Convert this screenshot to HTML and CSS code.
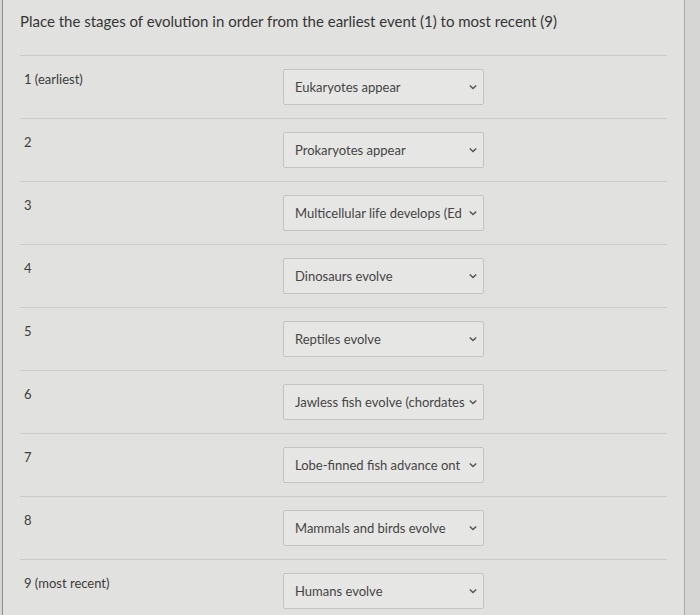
FILE: index.html
```html
<!DOCTYPE html>
<html>
<head>
<meta charset="utf-8">
<link rel="stylesheet" href="styles.css">
</head>
<body>
<div class="panel">
  <div class="title">Place the stages of evolution in order from the earliest event (1) to most recent (9)</div>
  <div class="row"><div class="label">1 (earliest)</div><div class="select"><span>Eukaryotes appear</span><svg class="chev" viewBox="0 0 10 6"><path d="M1 1 L5 5 L9 1"/></svg></div></div>
  <div class="row"><div class="label">2</div><div class="select"><span>Prokaryotes appear</span><svg class="chev" viewBox="0 0 10 6"><path d="M1 1 L5 5 L9 1"/></svg></div></div>
  <div class="row"><div class="label">3</div><div class="select"><span>Multicellular life develops (Ed</span><svg class="chev" viewBox="0 0 10 6"><path d="M1 1 L5 5 L9 1"/></svg></div></div>
  <div class="row"><div class="label">4</div><div class="select"><span>Dinosaurs evolve</span><svg class="chev" viewBox="0 0 10 6"><path d="M1 1 L5 5 L9 1"/></svg></div></div>
  <div class="row"><div class="label">5</div><div class="select"><span>Reptiles evolve</span><svg class="chev" viewBox="0 0 10 6"><path d="M1 1 L5 5 L9 1"/></svg></div></div>
  <div class="row"><div class="label">6</div><div class="select"><span>Jawless fish evolve (chordates</span><svg class="chev" viewBox="0 0 10 6"><path d="M1 1 L5 5 L9 1"/></svg></div></div>
  <div class="row"><div class="label">7</div><div class="select"><span>Lobe-finned fish advance ont</span><svg class="chev" viewBox="0 0 10 6"><path d="M1 1 L5 5 L9 1"/></svg></div></div>
  <div class="row"><div class="label">8</div><div class="select"><span>Mammals and birds evolve</span><svg class="chev" viewBox="0 0 10 6"><path d="M1 1 L5 5 L9 1"/></svg></div></div>
  <div class="row last"><div class="label">9 (most recent)</div><div class="select"><span>Humans evolve</span><svg class="chev" viewBox="0 0 10 6"><path d="M1 1 L5 5 L9 1"/></svg></div></div>
</div>
</body>
</html>
```
FILE: styles.css
```css
html, body {
  margin: 0;
  padding: 0;
  background: #d6d6d4;
  font-family: Lato, "Liberation Sans", sans-serif;
  color: #3a3a3a;
}
.panel {
  margin-left: 2px;
  width: 683px;
  height: 615px;
  box-sizing: border-box;
  background: #e1e1df;
  border-left: 1px solid #8e8e8c;
  border-right: 1px solid #a8a8a6;
  padding: 0 17px;
  overflow: hidden;
}
.title {
  height: 56px;
  box-sizing: border-box;
  padding-top: 11px;
  font-size: 15px;
  line-height: 20px;
  color: #363636;
  border-bottom: 1px solid #cbcbc9;
}
.row {
  display: grid;
  grid-template-columns: 259px 201px;
  padding: 13px 0 13px 4px;
  height: 63px;
  box-sizing: border-box;
  border-bottom: 1px solid #cbcbc9;
}
.row.last {
  border-bottom: none;
}
.label {
  font-size: 13px;
  line-height: 16px;
  padding-top: 2px;
  color: #3c3c3c;
}
.select {
  height: 36px;
  box-sizing: border-box;
  border: 1px solid #c4c4c2;
  border-radius: 2px;
  background: #e6e6e4;
  display: flex;
  align-items: center;
  justify-content: space-between;
  padding: 0 6px 0 11px;
  font-size: 13px;
  color: #454545;
  white-space: nowrap;
  overflow: hidden;
}
.select span {
  overflow: hidden;
  width: 170px;
}
.chev {
  width: 8px;
  height: 6px;
  flex: none;
}
.chev path {
  fill: none;
  stroke: #555;
  stroke-width: 1.8;
}
```
